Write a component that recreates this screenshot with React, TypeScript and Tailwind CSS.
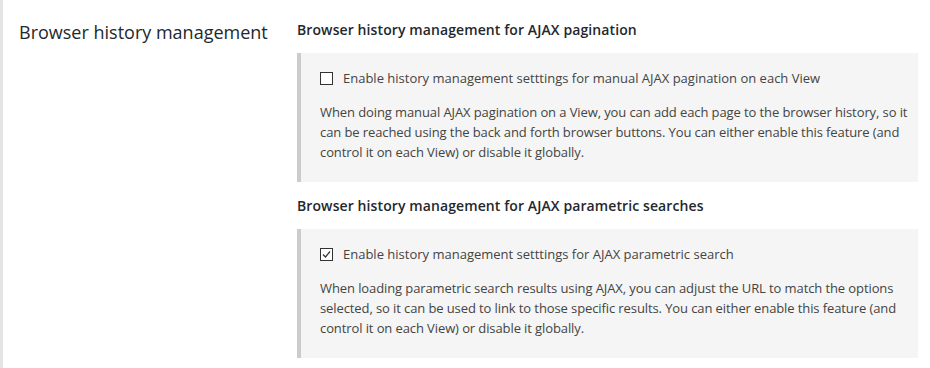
import React from 'react';

const Setting = ({
  title,
  label,
  checked,
  text,
  first,
}: {
  title: string;
  label: string;
  checked: boolean;
  text: string;
  first?: boolean;
}) => (
  <div className={first ? '' : 'mt-[14px]'}>
    <h3 className="text-[14px] leading-[20px] font-semibold text-[#23282d] tracking-[0.1px]">{title}</h3>
    <div className="mt-[13px] bg-[#f5f5f5] border-l-4 border-[#cccccc] pl-[19px] pr-[2px] pt-[15px] pb-[20px]">
      <label className="flex items-center gap-[10px] text-[13px] leading-[20px] text-[#444]">
        <span className="w-[13px] h-[13px] border border-[#333] bg-white flex items-center justify-center shrink-0">
          {checked && (
            <svg width="11" height="11" viewBox="0 0 11 11" fill="none">
              <path d="M2 5.5 L4.5 8 L9 2.5" stroke="#333" strokeWidth="1.2" />
            </svg>
          )}
        </span>
        {label}
      </label>
      <p className="mt-[14px] text-[13px] leading-[20px] text-[#444] tracking-[-0.1px]">{text}</p>
    </div>
  </div>
);

export default function App() {
  return (
    <div
      className="w-[930px] h-[368px] bg-white border-l-[3px] border-[#e5e5e5] flex"
      style={{ fontFamily: '"Open Sans", sans-serif' }}
    >
      <div className="w-[294px] shrink-0 pl-[16px] pt-[18px]">
        <h2 className="text-[18px] leading-[28px] text-[#23282d]">Browser history management</h2>
      </div>
      <div className="w-[621px] pt-[20px]">
        <Setting
          first
          title="Browser history management for AJAX pagination"
          label="Enable history management setttings for manual AJAX pagination on each View"
          checked={false}
          text="When doing manual AJAX pagination on a View, you can add each page to the browser history, so it can be reached using the back and forth browser buttons. You can either enable this feature (and control it on each View) or disable it globally."
        />
        <Setting
          title="Browser history management for AJAX parametric searches"
          label="Enable history management setttings for AJAX parametric search"
          checked={true}
          text="When loading parametric search results using AJAX, you can adjust the URL to match the options selected, so it can be used to link to those specific results. You can either enable this feature (and control it on each View) or disable it globally."
        />
      </div>
    </div>
  );
}
